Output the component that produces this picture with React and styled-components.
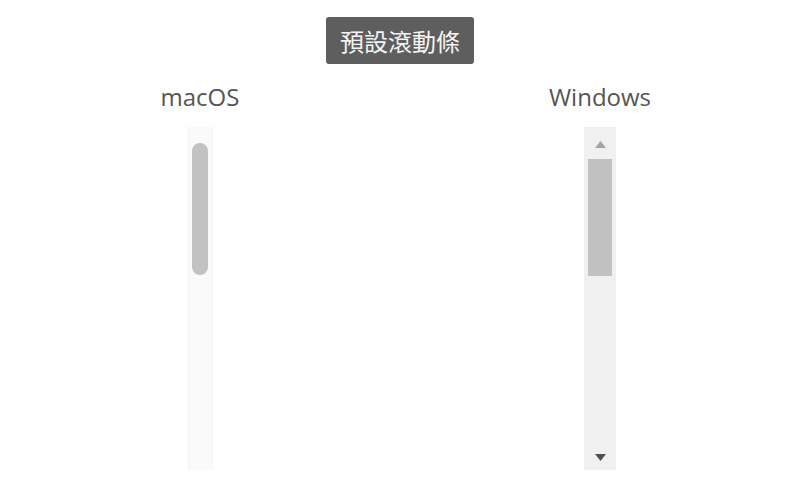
import React from "react";
import styled, { createGlobalStyle } from "styled-components";

const Global = createGlobalStyle`
  html, body { margin: 0; padding: 0; background: #ffffff; }
  body { font-family: "Open Sans", "Noto Sans CJK TC", sans-serif; }
`;

const Page = styled.div`
  width: 800px;
  height: 500px;
  display: flex;
  flex-direction: column;
  align-items: center;
  padding-top: 17px;
  box-sizing: border-box;
`;

const Badge = styled.div`
  height: 47px;
  padding: 0 14px;
  box-sizing: border-box;
  display: flex;
  align-items: center;
  background: #5e5e5e;
  color: #f4f4f4;
  border-radius: 3px;
  font-family: "Noto Sans CJK TC", "Noto Sans", sans-serif;
  font-size: 24px;
  line-height: 1;
`;

const Columns = styled.div`
  width: 100%;
  display: grid;
  grid-template-columns: 1fr 1fr;
  margin-top: 18px;
`;

const Column = styled.div`
  display: flex;
  flex-direction: column;
  align-items: center;
`;

const Label = styled.div`
  font-family: "Open Sans", sans-serif;
  font-size: 24px;
  line-height: 30px;
  color: #555555;
  margin-bottom: 15px;
`;

const MacTrack = styled.div`
  width: 25px;
  height: 343px;
  box-sizing: border-box;
  background: #fafafa;
  border-left: 1px solid #f1f1f1;
  border-right: 1px solid #f4f4f4;
  display: flex;
  justify-content: center;
  padding-top: 16px;
`;

const MacThumb = styled.div`
  width: 16px;
  height: 132px;
  border-radius: 8px;
  background: #c2c2c2;
`;

const WinTrack = styled.div`
  width: 32px;
  height: 343px;
  background: #f0f0f0;
  display: flex;
  flex-direction: column;
  align-items: center;
`;

const ArrowButton = styled.div`
  width: 32px;
  height: 32px;
  flex: none;
  display: flex;
  justify-content: center;
  align-items: ${(p) => (p.$down ? "flex-end" : "flex-start")};
  padding: ${(p) => (p.$down ? "0 0 9px" : "14px 0 0")};
  box-sizing: border-box;
`;

const WinThumb = styled.div`
  width: 24px;
  height: 117px;
  background: #c1c1c1;
  flex: none;
`;

const Spacer = styled.div`
  flex: 1;
`;

const Tri = ({ down, color }) => (
  <svg width="11" height="7" viewBox="0 0 11 7">
    {down ? (
      <polygon points="0,0 11,0 5.5,7" fill={color} />
    ) : (
      <polygon points="5.5,0 11,7 0,7" fill={color} />
    )}
  </svg>
);

export default function App() {
  return (
    <>
      <Global />
      <Page>
        <Badge>預設滾動條</Badge>
        <Columns>
          <Column>
            <Label>macOS</Label>
            <MacTrack>
              <MacThumb />
            </MacTrack>
          </Column>
          <Column>
            <Label>Windows</Label>
            <WinTrack>
              <ArrowButton>
                <Tri color="#a3a3a3" />
              </ArrowButton>
              <WinThumb />
              <Spacer />
              <ArrowButton $down>
                <Tri down color="#505050" />
              </ArrowButton>
            </WinTrack>
          </Column>
        </Columns>
      </Page>
    </>
  );
}
